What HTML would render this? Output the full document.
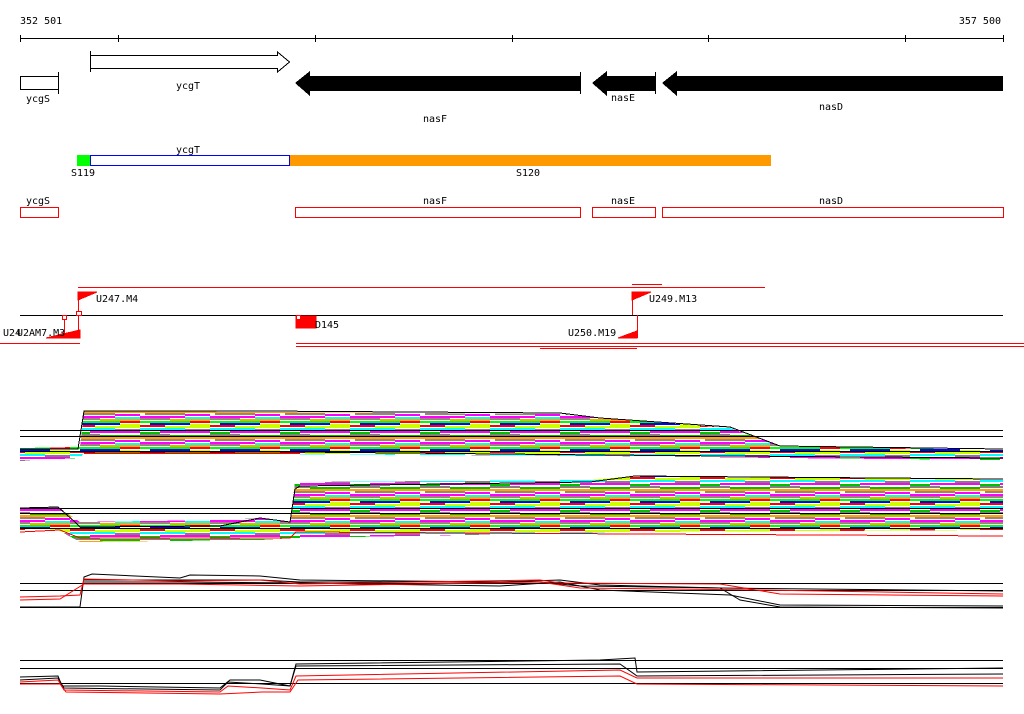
<!DOCTYPE html>
<html><head><meta charset="utf-8"><style>
html,body{margin:0;padding:0;background:#fff;width:1024px;height:714px;overflow:hidden}
svg text{font-family:"DejaVu Sans Mono","Liberation Mono",monospace;font-size:10px;fill:#000}
</style></head><body>
<svg width="1024" height="714" viewBox="0 0 1024 714" xmlns="http://www.w3.org/2000/svg" shape-rendering="crispEdges">
<defs>
<pattern id="st" patternUnits="userSpaceOnUse" width="70" height="26">
<rect width="70" height="26" fill="#fff"/>
<rect y="0" width="45" height="2" fill="#ff00ff"/><rect x="45" y="1" width="25" height="2" fill="#00ffff"/>
<rect y="2" width="30" height="2" fill="#a08080"/><rect x="30" y="3" width="40" height="2" fill="#ffa500"/>
<rect y="5" width="50" height="2" fill="#00ff00"/><rect x="50" y="5" width="20" height="2" fill="#ff0000"/>
<rect x="10" y="7" width="40" height="2" fill="#0000ff"/><rect x="50" y="8" width="20" height="2" fill="#ccff00"/>
<rect y="9" width="25" height="2" fill="#ff0000"/><rect x="25" y="10" width="45" height="2" fill="#ccff00"/>
<rect y="12" width="45" height="2" fill="#00ffff"/><rect x="45" y="13" width="25" height="2" fill="#808080"/>
<rect x="20" y="15" width="50" height="2" fill="#ff00ff"/><rect y="16" width="20" height="2" fill="#00c000"/>
<rect y="18" width="30" height="2" fill="#808080"/><rect x="30" y="19" width="40" height="2" fill="#00c000"/>
<rect y="21" width="70" height="2" fill="#ffa500"/><rect x="5" y="23" width="40" height="2" fill="#a08080"/>
<rect x="45" y="24" width="25" height="2" fill="#ff00ff"/>
</pattern>
</defs>
<text x="20" y="24">352 501</text>
<text x="1001" y="24" text-anchor="end">357 500</text>
<g stroke="#000" stroke-width="1">
<line x1="20" y1="38.5" x2="1003" y2="38.5"/>
<line x1="20.5" y1="35" x2="20.5" y2="42"/><line x1="118.5" y1="35" x2="118.5" y2="42"/><line x1="315.5" y1="35" x2="315.5" y2="42"/><line x1="512.5" y1="35" x2="512.5" y2="42"/><line x1="708.5" y1="35" x2="708.5" y2="42"/><line x1="905.5" y1="35" x2="905.5" y2="42"/><line x1="1003.5" y1="35" x2="1003.5" y2="42"/>
</g>
<rect x="20.5" y="76.5" width="38" height="13" fill="#fff" stroke="#000"/>
<line x1="58.5" y1="72" x2="58.5" y2="94" stroke="#000"/>
<text x="38" y="102" text-anchor="middle">ycgS</text>
<polygon points="90.5,55.5 277.5,55.5 277.5,52 289.5,62 277.5,72 277.5,68.5 90.5,68.5" fill="#fff" stroke="#000"/>
<line x1="90.5" y1="51" x2="90.5" y2="72" stroke="#000"/>
<text x="188" y="89" text-anchor="middle">ycgT</text>
<polygon points="295,83 310,71 310,76 580,76 580,91 310,91 310,96" fill="#000"/>
<line x1="580.5" y1="72" x2="580.5" y2="94" stroke="#000"/>
<polygon points="592,83 607,71 607,76 655,76 655,91 607,91 607,96" fill="#000"/>
<line x1="655.5" y1="72" x2="655.5" y2="94" stroke="#000"/>
<polygon points="662,83 677,71 677,76 1003,76 1003,91 677,91 677,96" fill="#000"/>
<text x="435" y="122" text-anchor="middle">nasF</text>
<text x="623" y="101" text-anchor="middle">nasE</text>
<text x="831" y="110" text-anchor="middle">nasD</text>
<text x="188" y="153" text-anchor="middle">ycgT</text>
<rect x="77" y="155" width="13" height="11" fill="#00ff00"/>
<rect x="90.5" y="155.5" width="199" height="10" fill="#fff" stroke="#0000ff"/>
<rect x="290" y="155" width="481" height="11" fill="#ff9900"/>
<text x="83" y="176" text-anchor="middle">S119</text>
<text x="528" y="176" text-anchor="middle">S120</text>
<g fill="none" stroke="#ff0000">
<rect x="20.5" y="207.5" width="38" height="10"/>
<rect x="295.5" y="207.5" width="285" height="10"/>
<rect x="592.5" y="207.5" width="63" height="10"/>
<rect x="662.5" y="207.5" width="341" height="10"/>
</g>
<text x="38" y="204" text-anchor="middle">ycgS</text>
<text x="435" y="204" text-anchor="middle">nasF</text>
<text x="623" y="204" text-anchor="middle">nasE</text>
<text x="831" y="204" text-anchor="middle">nasD</text>
<line x1="78" y1="287.5" x2="765" y2="287.5" stroke="#f00"/>
<line x1="632" y1="284.5" x2="662" y2="284.5" stroke="#f00"/>
<line x1="20" y1="315.5" x2="1003" y2="315.5" stroke="#000"/>
<line x1="0" y1="343.5" x2="80" y2="343.5" stroke="#f00"/>
<line x1="296" y1="343.5" x2="1024" y2="343.5" stroke="#f00"/>
<line x1="296" y1="346.5" x2="1024" y2="346.5" stroke="#f00"/>
<line x1="540" y1="348.5" x2="637" y2="348.5" stroke="#f00"/>
<g fill="#f00" stroke="#f00">
<line x1="78.5" y1="292" x2="78.5" y2="337"/>
<polygon points="78,292 97,292 78,300"/>
<polygon points="80,338 80,330 46,338"/>
<line x1="64.5" y1="316" x2="64.5" y2="337"/>
<polygon points="64,338 64,333 50,338"/>
<line x1="632.5" y1="292" x2="632.5" y2="315"/>
<polygon points="632,292 651,292 632,300"/>
<line x1="637.5" y1="315" x2="637.5" y2="338"/>
<polygon points="637,338 637,331 618,338"/>
<rect x="296" y="316" width="20" height="12"/>
</g>
<rect x="62.5" y="315.5" width="4" height="4" fill="#fff" stroke="#f00"/>
<rect x="76.5" y="311.5" width="5" height="4" fill="#fff" stroke="#f00"/>
<rect x="296.5" y="315.5" width="4" height="4" fill="#fff" stroke="#f00"/>
<text x="96" y="302">U247.M4</text>
<text x="649" y="302">U249.M13</text>
<text x="315" y="328">D145</text>
<text x="568" y="336">U250.M19</text>
<text x="3" y="336">U24</text><text x="17" y="336">U2AM7.M3</text>
<polygon points="20,448 80,447 84,411 260,412 560,414 600,418 730,428 780,446 1003,450 1003,460 780,458 600,456 84,453 80,458 20,461" fill="url(#st)"/>
<polyline points="20,449 78,449 84,411 260,411 560,413 600,418 730,427 780,446 1003,449" fill="none" stroke="#000"/>
<polyline points="84,452 300,452 600,455 1003,458" fill="none" stroke="#000"/>
<g stroke="#000"><line x1="20" y1="430.5" x2="1003" y2="430.5"/><line x1="20" y1="436.5" x2="1003" y2="436.5"/><line x1="20" y1="451.5" x2="1003" y2="451.5"/></g>
<line x1="84" y1="453.5" x2="300" y2="453.5" stroke="#f00"/>
<polygon points="20,508 58,507 80,522 220,520 260,518 290,522 295,482 590,480 635,476 1003,479 1003,530 635,532 295,538 260,540 80,542 58,530 20,530" fill="url(#st)"/>
<polyline points="20,508 58,507 75,522 80,527 220,526 260,518 290,522 295,489 300,486 590,482 635,476 1003,479" fill="none" stroke="#000"/>
<g stroke="#000"><line x1="20" y1="508.5" x2="1003" y2="508.5"/><line x1="20" y1="513.5" x2="1003" y2="513.5"/><line x1="20" y1="528.5" x2="1003" y2="528.5"/></g>
<polyline points="20,532 60,530 80,538 290,538 296,532 640,534 1003,536" fill="none" stroke="#f00"/>
<g stroke="#000"><line x1="20" y1="583.5" x2="1003" y2="583.5"/><line x1="20" y1="590.5" x2="1003" y2="590.5"/><line x1="20" y1="607.5" x2="1003" y2="607.5"/></g>
<g fill="none" stroke-width="1" shape-rendering="auto">
<polyline points="20,607 80,607 84,577 92,574 180,578 190,575 260,576 300,580 500,582 560,580 600,585 720,588 740,600 780,607 1003,608" stroke="#000"/>
<polyline points="84,582 180,582 300,583 500,586 560,582 600,590 730,595 780,605 1003,606" stroke="#000"/>
<polyline points="84,580 180,580 260,580 300,582 540,582 580,586 720,588 1003,591" stroke="#000"/>
<polyline points="20,597 60,596 80,595 84,579 180,581 260,580 300,584 540,580 560,583 720,584 780,594 1003,596" stroke="#f00"/>
<polyline points="20,600 60,599 84,584 180,584 300,586 540,582 580,588 760,590 1003,594" stroke="#f00"/>
</g>
<g stroke="#000"><line x1="20" y1="660.5" x2="1003" y2="660.5"/><line x1="20" y1="668.5" x2="1003" y2="668.5"/><line x1="20" y1="683.5" x2="1003" y2="683.5"/></g>
<g fill="none" stroke-width="1" shape-rendering="auto">
<polyline points="20,677 58,676 62,686 100,686 220,688 230,680 260,680 290,686 296,664 600,660 635,658 637,672 1003,668" stroke="#000"/>
<polyline points="20,680 58,678 64,688 220,690 228,682 262,684 290,686 296,666 620,664 637,676 1003,674" stroke="#000"/>
<polyline points="20,682 58,680 64,690 220,692 228,686 262,688 290,690 296,676 620,670 637,678 1003,678" stroke="#f00"/>
<polyline points="20,684 60,684 66,692 220,694 262,692 290,692 298,680 620,676 637,684 1003,686" stroke="#f00"/>
</g>
</svg>
</body></html>
